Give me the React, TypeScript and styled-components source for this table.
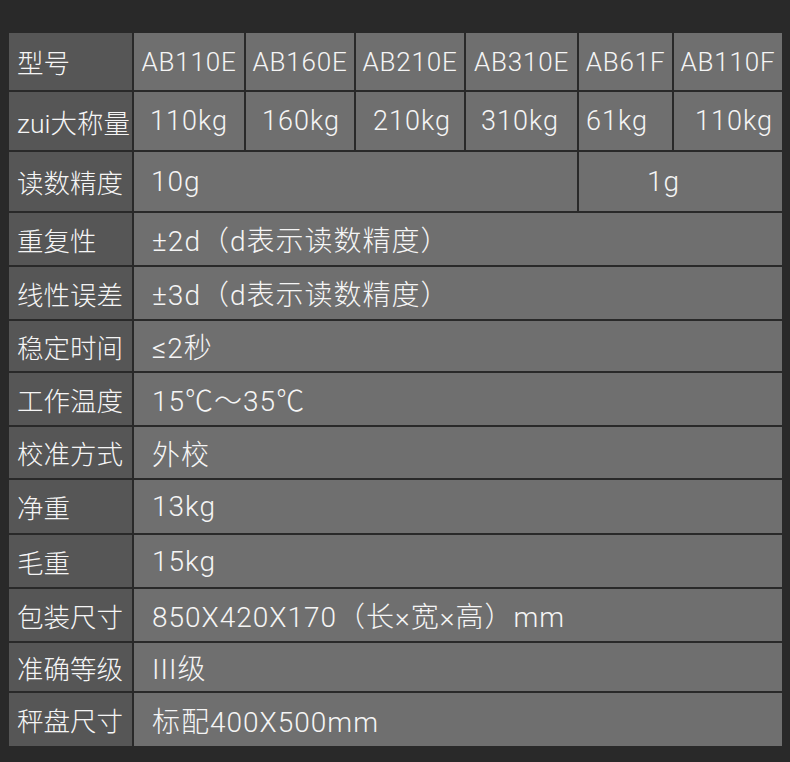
import React from "react";
import styled, { createGlobalStyle } from "styled-components";

const GlobalStyle = createGlobalStyle`
  html, body {
    margin: 0;
    padding: 0;
    background: #292929;
  }
  body {
    font-family: "Roboto", "Noto Sans CJK SC", sans-serif;
    font-weight: 300;
    color: #f5f5f5;
  }
`;

const Page = styled.div`
  width: 790px;
  min-height: 762px;
  box-sizing: border-box;
  padding: 33px 8px 16px 9px;
  background: #292929;
`;

const Table = styled.div`
  display: flex;
  flex-direction: column;
  gap: 2px;
  width: 773px;
`;

const Row = styled.div<{ $h: number }>`
  display: grid;
  grid-template-columns: 123px 110px 108px 108px 111px 93px 108px;
  column-gap: 2px;
  height: ${(p) => p.$h}px;
`;

const Label = styled.div`
  display: flex;
  align-items: center;
  padding-left: 8px;
  background: #565656;
  font-size: 26.5px;
  white-space: nowrap;
  overflow: hidden;
`;

const Cell = styled.div<{
  $span?: number;
  $pad?: number;
  $center?: boolean;
  $size?: number;
  $track?: number;
}>`
  grid-column: span ${(p) => p.$span ?? 1};
  display: flex;
  align-items: center;
  justify-content: ${(p) => (p.$center ? "center" : "flex-start")};
  padding-left: ${(p) => (p.$center ? 0 : p.$pad ?? 18)}px;
  background: #6f6f6f;
  font-size: ${(p) => p.$size ?? 28}px;
  letter-spacing: ${(p) => p.$track ?? 1}px;
  white-space: nowrap;
  overflow: hidden;
`;

const models = ["AB110E", "AB160E", "AB210E", "AB310E", "AB61F", "AB110F"];
const capacities: [string, number][] = [
  ["110kg", 16],
  ["160kg", 16],
  ["210kg", 17],
  ["310kg", 15],
  ["61kg", 7],
  ["110kg", 21],
];

const specs: [string, string, number][] = [
  ["重复性", "±2d（d表示读数精度）", 52],
  ["线性误差", "±3d（d表示读数精度）", 52],
  ["稳定时间", "≤2秒", 50],
  ["工作温度", "15℃～35℃", 52],
  ["校准方式", "外校", 51],
  ["净重", "13kg", 53],
  ["毛重", "15kg", 52],
  ["包装尺寸", "850X420X170（长×宽×高）mm", 52],
  ["准确等级", "III级", 48],
  ["秤盘尺寸", "标配400X500mm", 53],
];

export default function App() {
  return (
    <>
      <GlobalStyle />
      <Page>
        <Table>
          <Row $h={57}>
            <Label>型号</Label>
            {models.map((m) => (
              <Cell key={m} $center $size={26} $track={0.8}>
                {m}
              </Cell>
            ))}
          </Row>
          <Row $h={58}>
            <Label>zui大称量</Label>
            {capacities.map(([c, pad], i) => (
              <Cell key={i} $pad={pad} $size={27} $track={1}>
                {c}
              </Cell>
            ))}
          </Row>
          <Row $h={59}>
            <Label>读数精度</Label>
            <Cell $span={4} $pad={17}>
              10g
            </Cell>
            <Cell $span={2} $pad={68}>
              1g
            </Cell>
          </Row>
          {specs.map(([label, value, h]) => (
            <Row key={label} $h={h}>
              <Label>{label}</Label>
              <Cell $span={6} $pad={18}>
                {value}
              </Cell>
            </Row>
          ))}
        </Table>
      </Page>
    </>
  );
}
